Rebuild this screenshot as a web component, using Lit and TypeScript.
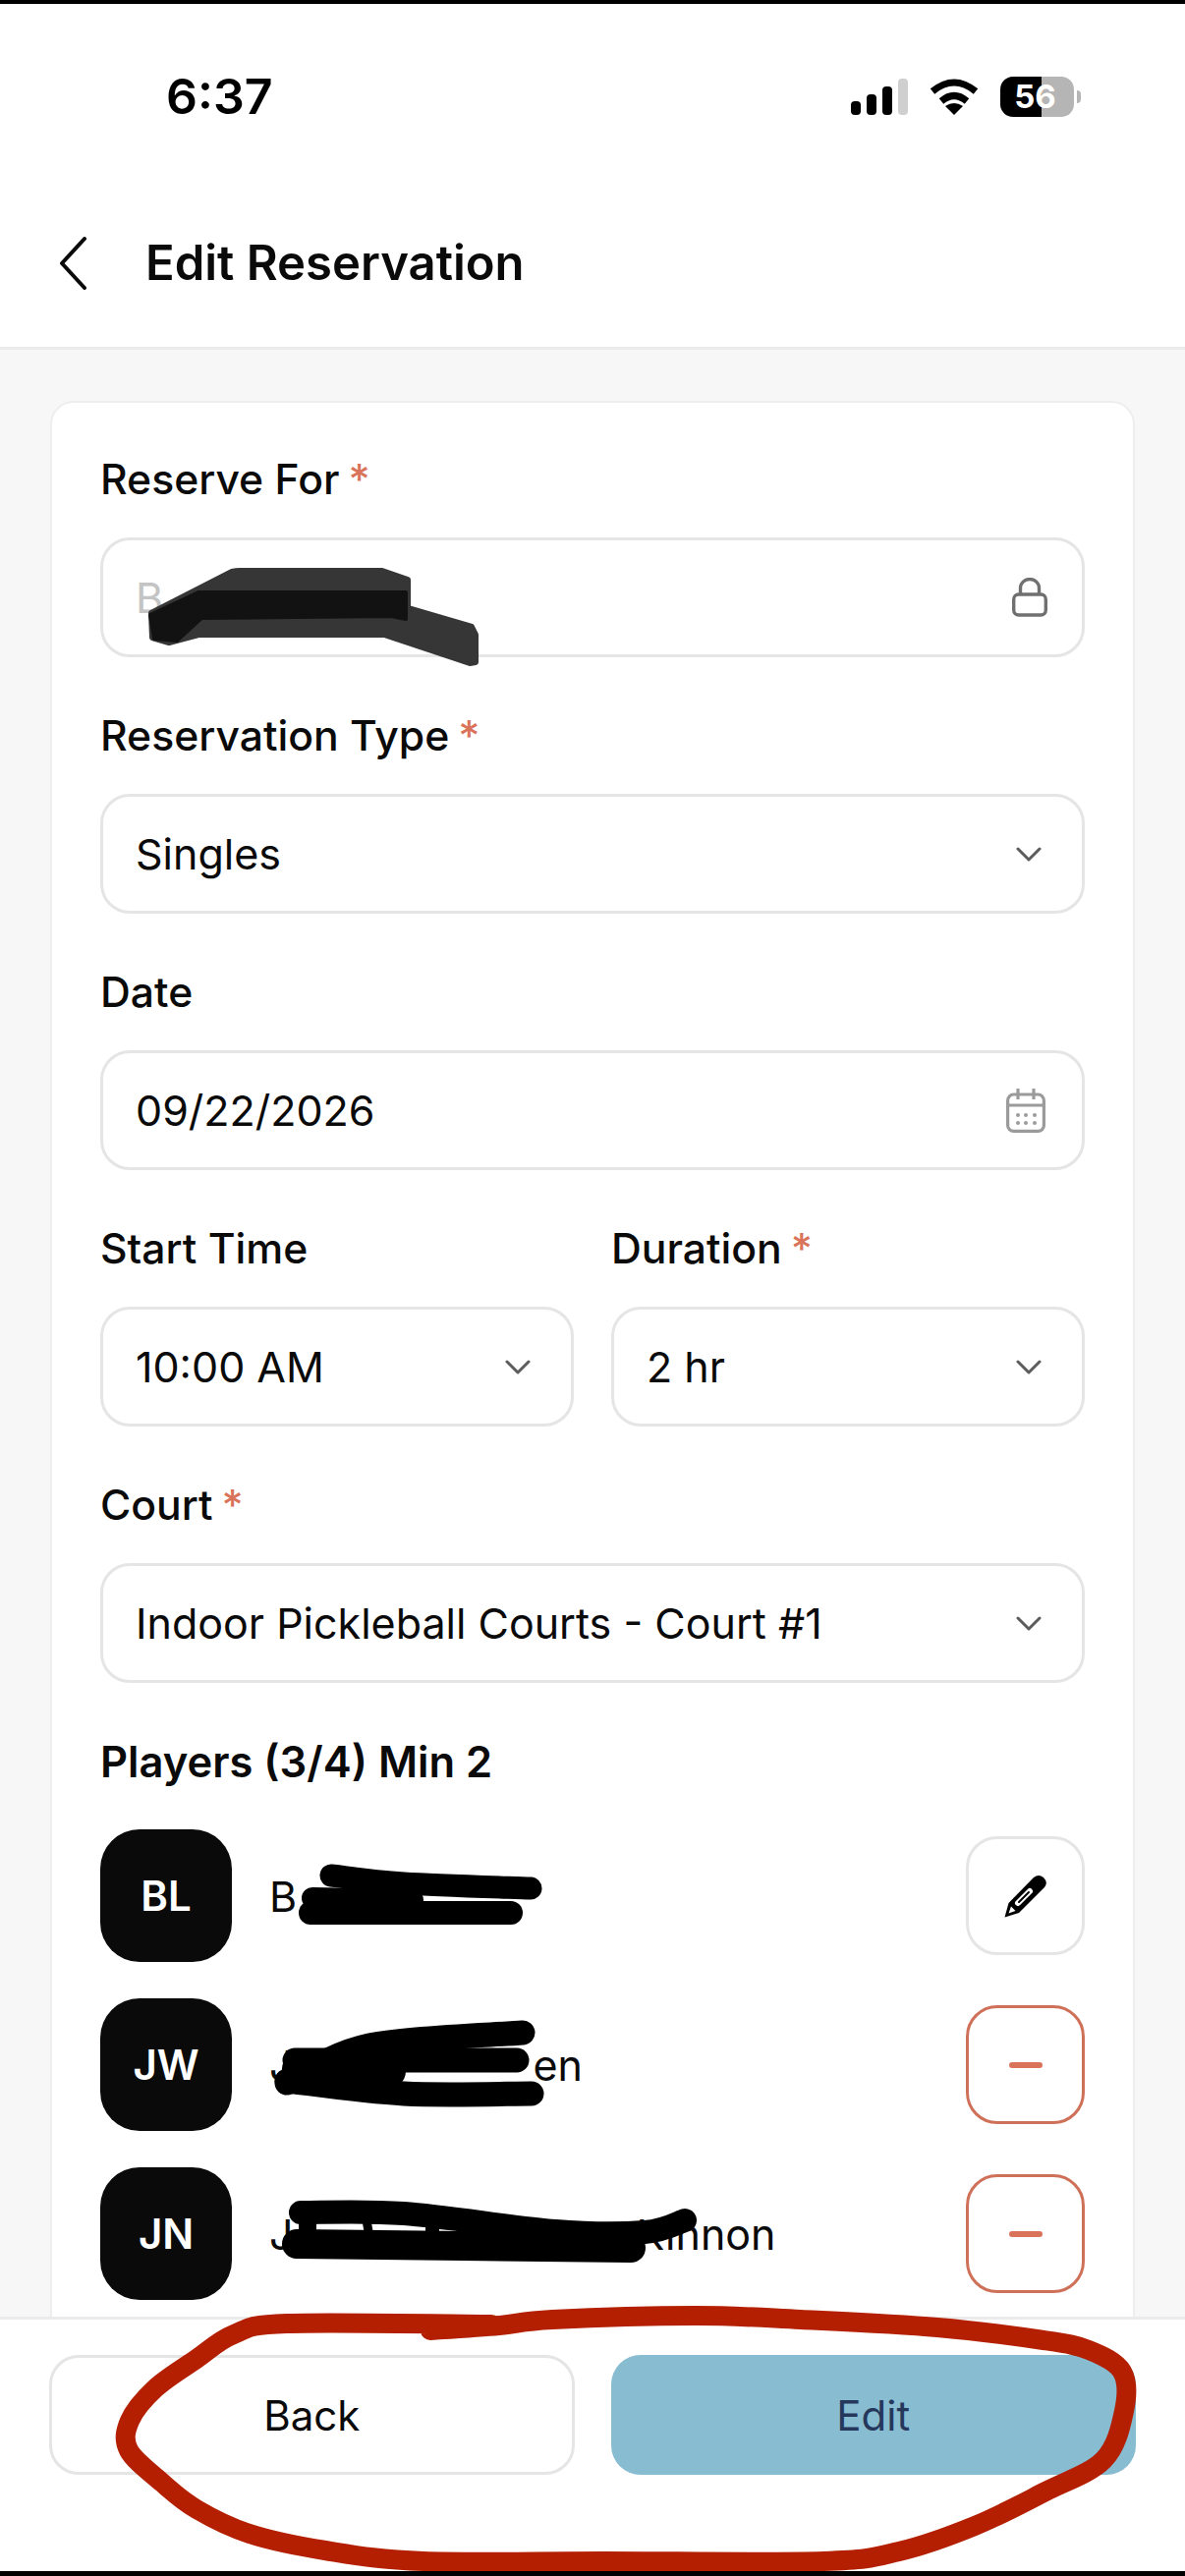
import { LitElement, html, css, svg } from 'lit';
import { customElement } from 'lit/decorators.js';

type Pt = [number, number];

// turns hand-picked points into a smooth marker line
function smooth(p: Pt[]): string {
  let d = `M${p[0][0]} ${p[0][1]}`;
  for (let i = 0; i < p.length - 1; i++) {
    const a = p[Math.max(i - 1, 0)];
    const b = p[i];
    const c = p[i + 1];
    const e = p[Math.min(i + 2, p.length - 1)];
    const c1x = b[0] + (c[0] - a[0]) / 6;
    const c1y = b[1] + (c[1] - a[1]) / 6;
    const c2x = c[0] - (e[0] - b[0]) / 6;
    const c2y = c[1] - (e[1] - b[1]) / 6;
    d += ` C${c1x.toFixed(1)} ${c1y.toFixed(1)} ${c2x.toFixed(1)} ${c2y.toFixed(1)} ${c[0]} ${c[1]}`;
  }
  return d;
}

const redLoop: Pt[] = [
  [500, 2362], [292, 2361], [238, 2372], [200, 2397], [158, 2427], [132, 2460], [131, 2490],
  [165, 2523], [200, 2550], [254, 2575], [331, 2592], [431, 2603], [615, 2603], [838, 2603],
  [915, 2593], [992, 2567], [1062, 2533], [1123, 2500], [1144, 2450], [1142, 2410], [1108, 2388],
  [1062, 2378], [954, 2365], [815, 2357], [708, 2353], [562, 2357], [508, 2363], [438, 2368],
];

const blackStrokes: { w: number; p: Pt[] }[] = [
  { w: 23, p: [[337, 1905], [411, 1913], [540, 1918]] },
  { w: 22, p: [[318, 1928], [420, 1930]] },
  { w: 24, p: [[316, 1943], [520, 1943]] },
  { w: 25, p: [[292, 2116], [376, 2078], [532, 2065]] },
  { w: 25, p: [[300, 2093], [526, 2093]] },
  { w: 25, p: [[292, 2114], [411, 2127], [541, 2127]] },
  { w: 36, p: [[305, 2102], [395, 2104]] },
  { w: 24, p: [[306, 2248], [411, 2249], [565, 2267], [656, 2268], [697, 2256]] },
  { w: 30, p: [[302, 2280], [642, 2284]] },
  { w: 18, p: [[313, 2246], [313, 2277]] },
  { w: 9, p: [[372, 2250], [376, 2273]] },
  { w: 14, p: [[440, 2262], [440, 2278]] },
];

@customElement('scribble-layer')
class ScribbleLayer extends LitElement {
  static styles = css`
    :host {
      position: absolute;
      left: 0;
      top: 0;
      width: 1206px;
      height: 2622px;
      pointer-events: none;
    }
    svg {
      display: block;
    }
  `;

  render() {
    return html`<svg width="1206" height="2622" viewBox="0 0 1206 2622" fill="none">
      <path fill="#363636" stroke="#363636" stroke-width="6" stroke-linejoin="round" d="M236 578 Q240 577 244 577 L389 577 L415 586 L415 615 L480 634 L484 642 L484 670 L478 671 L391 642 L202 642 L172 650 L155 645 L154 620 Z"/>
      <path fill="#121212" stroke="#121212" stroke-width="4" stroke-linejoin="round" d="M202 599 L413 599 L413 626 L398 623 L205 625 L180 648 L157 646 L153 622 Z"/>
      ${blackStrokes.map(s => svg`<path d=${smooth(s.p)} stroke="#000" stroke-width=${s.w} stroke-linecap="round" stroke-linejoin="round"/>`)}
      <path d=${smooth(redLoop)} stroke="#b31f00" stroke-width="20" stroke-linecap="round" stroke-linejoin="round"/>
    </svg>`;
  }
}

const chevron = html`<svg class="chev" width="26" height="15" viewBox="0 0 26 15" fill="none"><path d="M2 2 L13 13 L24 2" stroke="#5c5c5c" stroke-width="3" stroke-linecap="round" stroke-linejoin="round"/></svg>`;

const lock = html`<svg class="lock" width="36" height="40" viewBox="0 0 36 40" fill="none" stroke="#707070" stroke-width="3.4"><rect x="1.7" y="17" width="32.6" height="21" rx="5"/><path d="M8.5 17 V10.5 a9.5 9 0 0 1 19 0 V17"/></svg>`;

const calendar = html`<svg class="cal" width="40" height="45" viewBox="0 0 40 45" fill="none" stroke="#9b9b9b" stroke-width="3.2"><rect x="1.6" y="6" width="36.8" height="37.4" rx="6"/><path d="M1.6 17 H38.4 M12 0 V11 M28 0 V11"/><g fill="#9b9b9b" stroke="none"><circle cx="12" cy="27" r="2"/><circle cx="20" cy="27" r="2"/><circle cx="29" cy="27" r="2"/><circle cx="12" cy="35" r="2"/><circle cx="20" cy="35" r="2"/><circle cx="29" cy="35" r="2"/></g></svg>`;

const pencil = html`<svg width="44" height="44" viewBox="0 0 44 44" fill="none"><path fill="#000" d="M0.5 43.5 L4.5 29 L30 3 Q35 -1 40 3 Q45 8 41 13 L15 39 Z"/><path d="M14 29 L26 17" stroke="#fff" stroke-width="6" stroke-linecap="round"/><path d="M15 28 L25 18" stroke="#000" stroke-width="2" stroke-linecap="round"/><path fill="#fff" d="M4.5 39.5 L7 32.5 L11.5 37 Z"/></svg>`;

const players = [
  { initials: 'BL', head: 'B', gap: 0, tail: '', action: 'edit' },
  { initials: 'JW', head: 'J', gap: 244, tail: 'en', action: 'remove' },
  { initials: 'JN', head: 'J', gap: 349, tail: 'Kinnon', action: 'remove' },
];

@customElement('app-root')
class AppRoot extends LitElement {
  static styles = css`
    :host {
      display: flex;
      flex-direction: column;
      position: relative;
      width: 1206px;
      height: 2622px;
      box-sizing: border-box;
      border-top: 4px solid #000;
      border-bottom: 5px solid #000;
      background: #fff;
      overflow: hidden;
      font-family: Inter, "Liberation Sans", sans-serif;
      color: #0a0a0a;
    }
    .status {
      height: 188px;
      flex: none;
      display: flex;
      align-items: center;
      justify-content: space-between;
      padding: 0 106px 0 169px;
      box-sizing: border-box;
    }
    .time {
      font-size: 50px;
      font-weight: 600;
      color: #000;
    }
    .status-icons {
      display: flex;
      align-items: center;
      gap: 22px;
    }
    .battery-wrap {
      display: flex;
      align-items: center;
      gap: 3px;
    }
    .battery {
      width: 75px;
      height: 41px;
      border-radius: 13px;
      background: linear-gradient(to right, #000 0 42px, #b5b5b5 42px);
      color: #fff;
      font-size: 33px;
      font-weight: 700;
      line-height: 41px;
      text-align: center;
      padding-right: 4px;
      box-sizing: border-box;
    }
    .nub {
      width: 4px;
      height: 13px;
      border-radius: 0 4px 4px 0;
      background: #b5b5b5;
    }
    .header {
      height: 164px;
      flex: none;
      box-sizing: border-box;
      padding: 0 0 10px 60px;
      display: flex;
      align-items: center;
      gap: 60px;
      border-bottom: 3px solid #ebebeb;
    }
    .header h1 {
      margin: 0;
      font-size: 49px;
      font-weight: 600;
    }
    .main {
      flex: 1;
      min-height: 0;
      overflow: hidden;
      background: #f7f7f7;
      padding: 52px 51px 0;
    }
    .card {
      background: #fff;
      border: 2px solid #eeeeee;
      border-radius: 24px;
      padding: 53px 49px 60px;
      display: flex;
      flex-direction: column;
      gap: 55px;
    }
    .label {
      height: 50px;
      line-height: 50px;
      font-size: 42.7px;
      font-weight: 500;
      margin-bottom: 34px;
      white-space: nowrap;
    }
    .req {
      color: #d9735a;
      margin-left: 9px;
    }
    .input {
      height: 122px;
      box-sizing: border-box;
      border: 3px solid #e5e5e5;
      border-radius: 30px;
      padding-left: 33px;
      display: flex;
      align-items: center;
      justify-content: space-between;
      font-size: 43px;
      white-space: nowrap;
    }
    .input.locked {
      color: #c4c4c4;
    }
    .chev {
      margin-right: 41px;
    }
    .lock {
      margin-right: 35px;
    }
    .cal {
      margin-right: 37px;
    }
    .pair {
      display: grid;
      grid-template-columns: 1fr 1fr;
      gap: 38px;
    }
    .players h2 {
      margin: 0 0 44px;
      height: 50px;
      line-height: 50px;
      font-size: 43.5px;
      font-weight: 600;
    }
    .rows {
      display: flex;
      flex-direction: column;
      gap: 37px;
    }
    .row {
      display: flex;
      align-items: center;
      height: 135px;
    }
    .avatar {
      width: 134px;
      height: 135px;
      flex: none;
      border-radius: 40px;
      background: #0a0a0a;
      color: #fff;
      font-size: 42px;
      font-weight: 600;
      display: flex;
      align-items: center;
      justify-content: center;
    }
    .name {
      flex: 1;
      margin-left: 38px;
      font-size: 43px;
      white-space: nowrap;
    }
    .action {
      width: 121px;
      height: 121px;
      flex: none;
      box-sizing: border-box;
      border: 3px solid #e5e5e5;
      border-radius: 32px;
      display: flex;
      align-items: center;
      justify-content: center;
    }
    .action.remove {
      border-color: #cf7059;
    }
    .minus {
      width: 34px;
      height: 6px;
      border-radius: 3px;
      background: #d9735a;
    }
    .footer {
      flex: none;
      height: 259px;
      box-sizing: border-box;
      background: #fff;
      border-top: 3px solid #ebebeb;
      padding: 36px 50px 0;
      display: grid;
      grid-template-columns: 1fr 1fr;
      grid-template-rows: 122px;
      gap: 37px;
    }
    .btn {
      box-sizing: border-box;
      border-radius: 30px;
      display: flex;
      align-items: center;
      justify-content: center;
      font-size: 42px;
    }
    .btn.back {
      border: 3px solid #e5e5e5;
    }
    .btn.edit {
      background: #87bcd1;
      color: #26375c;
    }
  `;

  field(label: string, required: boolean, value: unknown, icon: unknown, extra = '') {
    return html`<div>
      <div class="label">${label}${required ? html`<span class="req">*</span>` : ''}</div>
      <div class="input ${extra}"><span>${value}</span>${icon}</div>
    </div>`;
  }

  render() {
    return html`
      <div class="status">
        <span class="time">6:37</span>
        <div class="status-icons">
          <svg width="58" height="37" viewBox="0 0 58 37">
            <rect x="0" y="23" width="10" height="14" rx="4"/>
            <rect x="16" y="16" width="10" height="21" rx="4"/>
            <rect x="32" y="8" width="10" height="29" rx="4"/>
            <rect x="48" y="0" width="10" height="37" rx="4" fill="#cfcfcf"/>
          </svg>
          <svg width="50" height="37" viewBox="0 0 50 37" fill="none" stroke="#000" stroke-width="7">
            <path d="M3 13 Q25 -5 47 13"/>
            <path d="M12 23 Q25 12 38 23"/>
            <path fill="#000" stroke="none" d="M25 37 L16 28 Q25 22 34 28 Z"/>
          </svg>
          <div class="battery-wrap"><div class="battery">56</div><div class="nub"></div></div>
        </div>
      </div>
      <div class="header">
        <svg width="28" height="54" viewBox="0 0 28 54" fill="none"><path d="M26 2 L3 27 L26 52" stroke="#0a0a0a" stroke-width="4" stroke-linecap="round" stroke-linejoin="round"/></svg>
        <h1>Edit Reservation</h1>
      </div>
      <div class="main">
        <div class="card">
          ${this.field('Reserve For', true, 'B', lock, 'locked')}
          ${this.field('Reservation Type', true, 'Singles', chevron)}
          ${this.field('Date', false, '09/22/2026', calendar)}
          <div class="pair">
            ${this.field('Start Time', false, '10:00 AM', chevron)}
            ${this.field('Duration', true, '2 hr', chevron)}
          </div>
          ${this.field('Court', true, 'Indoor Pickleball Courts - Court #1', chevron)}
          <div class="players">
            <h2>Players (3/4) Min 2</h2>
            <div class="rows">
              ${players.map(p => html`<div class="row">
                <div class="avatar">${p.initials}</div>
                <div class="name">${p.head}<span style="margin-left:${p.gap}px">${p.tail}</span></div>
                <div class="action ${p.action}">${p.action === 'edit' ? pencil : html`<span class="minus"></span>`}</div>
              </div>`)}
            </div>
          </div>
        </div>
      </div>
      <div class="footer">
        <div class="btn back">Back</div>
        <div class="btn edit">Edit</div>
      </div>
      <scribble-layer></scribble-layer>
    `;
  }
}
